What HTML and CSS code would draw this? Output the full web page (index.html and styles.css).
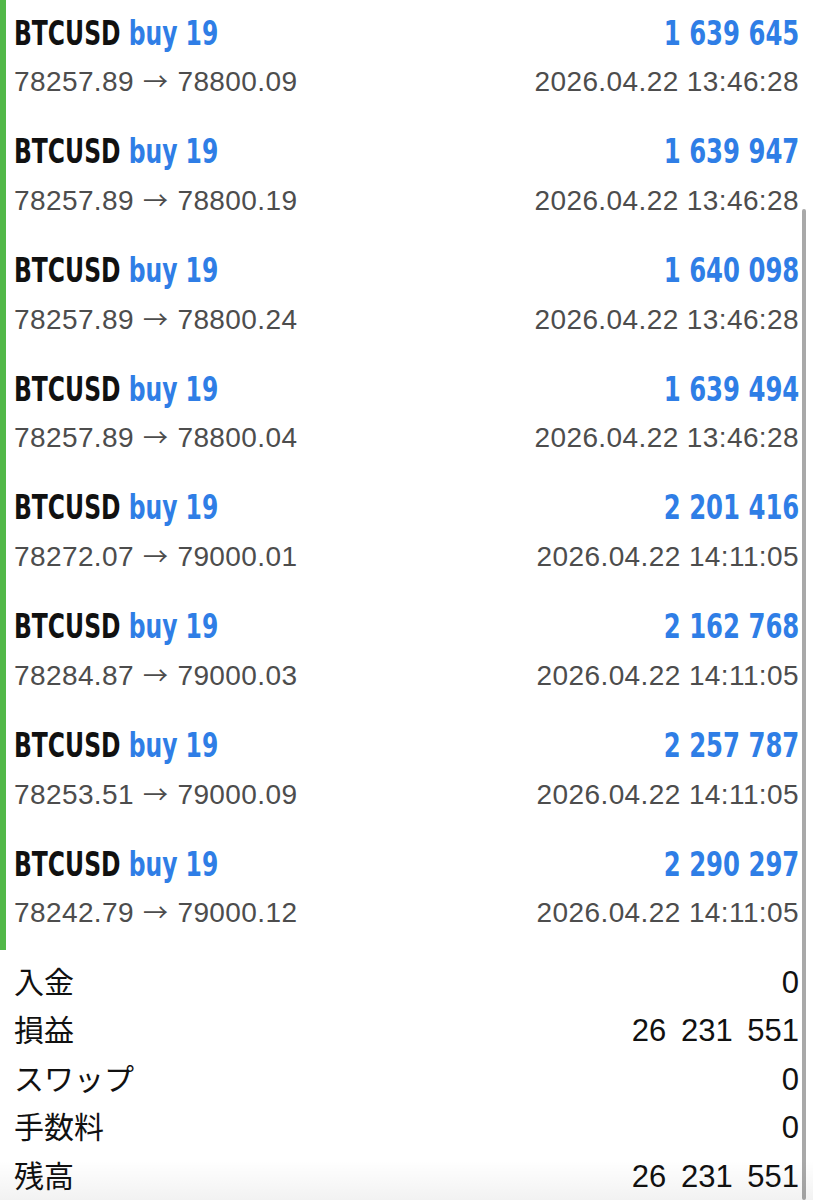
FILE: index.html
```html
<!DOCTYPE html>
<html lang="ja">
  <head>
    <meta charset="UTF-8" />
    <meta name="viewport" content="width=device-width, initial-scale=1.0" />
    <title>履歴</title>
    <link rel="stylesheet" href="styles.css">
  </head>
  <body>
    <div class="trades">
      <div class="trade">
        <div class="line">
          <span class="title">BTCUSD <span class="side">buy 19</span></span>
          <span class="profit">1 639 645</span>
        </div>
        <div class="line sub">
          <span>78257.89<span class="arrow">→</span>78800.09</span>
          <span>2026.04.22 13:46:28</span>
        </div>
      </div>
      <div class="trade">
        <div class="line">
          <span class="title">BTCUSD <span class="side">buy 19</span></span>
          <span class="profit">1 639 947</span>
        </div>
        <div class="line sub">
          <span>78257.89<span class="arrow">→</span>78800.19</span>
          <span>2026.04.22 13:46:28</span>
        </div>
      </div>
      <div class="trade">
        <div class="line">
          <span class="title">BTCUSD <span class="side">buy 19</span></span>
          <span class="profit">1 640 098</span>
        </div>
        <div class="line sub">
          <span>78257.89<span class="arrow">→</span>78800.24</span>
          <span>2026.04.22 13:46:28</span>
        </div>
      </div>
      <div class="trade">
        <div class="line">
          <span class="title">BTCUSD <span class="side">buy 19</span></span>
          <span class="profit">1 639 494</span>
        </div>
        <div class="line sub">
          <span>78257.89<span class="arrow">→</span>78800.04</span>
          <span>2026.04.22 13:46:28</span>
        </div>
      </div>
      <div class="trade">
        <div class="line">
          <span class="title">BTCUSD <span class="side">buy 19</span></span>
          <span class="profit">2 201 416</span>
        </div>
        <div class="line sub">
          <span>78272.07<span class="arrow">→</span>79000.01</span>
          <span>2026.04.22 14:11:05</span>
        </div>
      </div>
      <div class="trade">
        <div class="line">
          <span class="title">BTCUSD <span class="side">buy 19</span></span>
          <span class="profit">2 162 768</span>
        </div>
        <div class="line sub">
          <span>78284.87<span class="arrow">→</span>79000.03</span>
          <span>2026.04.22 14:11:05</span>
        </div>
      </div>
      <div class="trade">
        <div class="line">
          <span class="title">BTCUSD <span class="side">buy 19</span></span>
          <span class="profit">2 257 787</span>
        </div>
        <div class="line sub">
          <span>78253.51<span class="arrow">→</span>79000.09</span>
          <span>2026.04.22 14:11:05</span>
        </div>
      </div>
      <div class="trade">
        <div class="line">
          <span class="title">BTCUSD <span class="side">buy 19</span></span>
          <span class="profit">2 290 297</span>
        </div>
        <div class="line sub">
          <span>78242.79<span class="arrow">→</span>79000.12</span>
          <span>2026.04.22 14:11:05</span>
        </div>
      </div>
    </div>
    <div class="summary">
      <div class="row"><span class="label">入金</span><span class="value">0</span></div>
      <div class="row"><span class="label">損益</span><span class="value">26 231 551</span></div>
      <div class="row"><span class="label">スワップ</span><span class="value">0</span></div>
      <div class="row"><span class="label">手数料</span><span class="value">0</span></div>
      <div class="row"><span class="label">残高</span><span class="value">26 231 551</span></div>
    </div>
    <div class="scrollbar"></div>
    <div class="fade"></div>
  </body>
</html>
```

FILE: styles.css
```css
* {
  box-sizing: border-box;
}
body {
  margin: 0;
  background-color: #ffffff;
  font-family: "Liberation Sans", "Noto Sans CJK JP", sans-serif;
  color: #111111;
  position: relative;
  height: 1200px;
  overflow: hidden;
}
.trades {
  border-left: 6px solid #52b848;
  padding-left: 8px;
  padding-right: 14px;
}
.trade {
  padding-top: 13.6px;
  padding-bottom: 18.45px;
}
.line {
  display: flex;
  justify-content: space-between;
  align-items: baseline;
  height: 40px;
  line-height: 40px;
}
.title,
.profit {
  display: inline-block;
  font-family: "DejaVu Sans Condensed", "DejaVu Sans", sans-serif;
  font-weight: bold;
  font-size: 33px;
  white-space: nowrap;
}
.title {
  color: #111111;
  transform: scaleX(0.79);
  transform-origin: left center;
}
.profit {
  transform: scaleX(0.82);
  transform-origin: right center;
}
.side,
.profit {
  color: #2f7ee6;
}
.sub {
  margin-top: 10.7px;
  height: 36px;
  line-height: 36px;
  font-size: 28px;
  color: #4d4d4d;
  letter-spacing: 0.4px;
}
.arrow {
  font-family: "Noto Sans CJK JP", sans-serif;
  font-size: 25px;
  line-height: 1;
  margin: 0 9px;
}
.summary {
  padding: 6px 14px 0 14px;
}
.row {
  display: flex;
  justify-content: space-between;
  align-items: baseline;
  height: 48.5px;
  line-height: 48.5px;
}
.label {
  font-family: "Noto Sans CJK JP", sans-serif;
  font-size: 30px;
  color: #111111;
}
.value {
  font-size: 31px;
  word-spacing: 6px;
  color: #111111;
}
.scrollbar {
  position: absolute;
  left: 802px;
  top: 209px;
  width: 4px;
  height: 991px;
  background-color: #a9a9a9;
  border-radius: 2px;
}
.fade {
  position: absolute;
  left: 0;
  right: 0;
  bottom: 0;
  height: 40px;
  background: linear-gradient(rgba(0, 0, 0, 0), rgba(0, 0, 0, 0.05));
  pointer-events: none;
}
```
